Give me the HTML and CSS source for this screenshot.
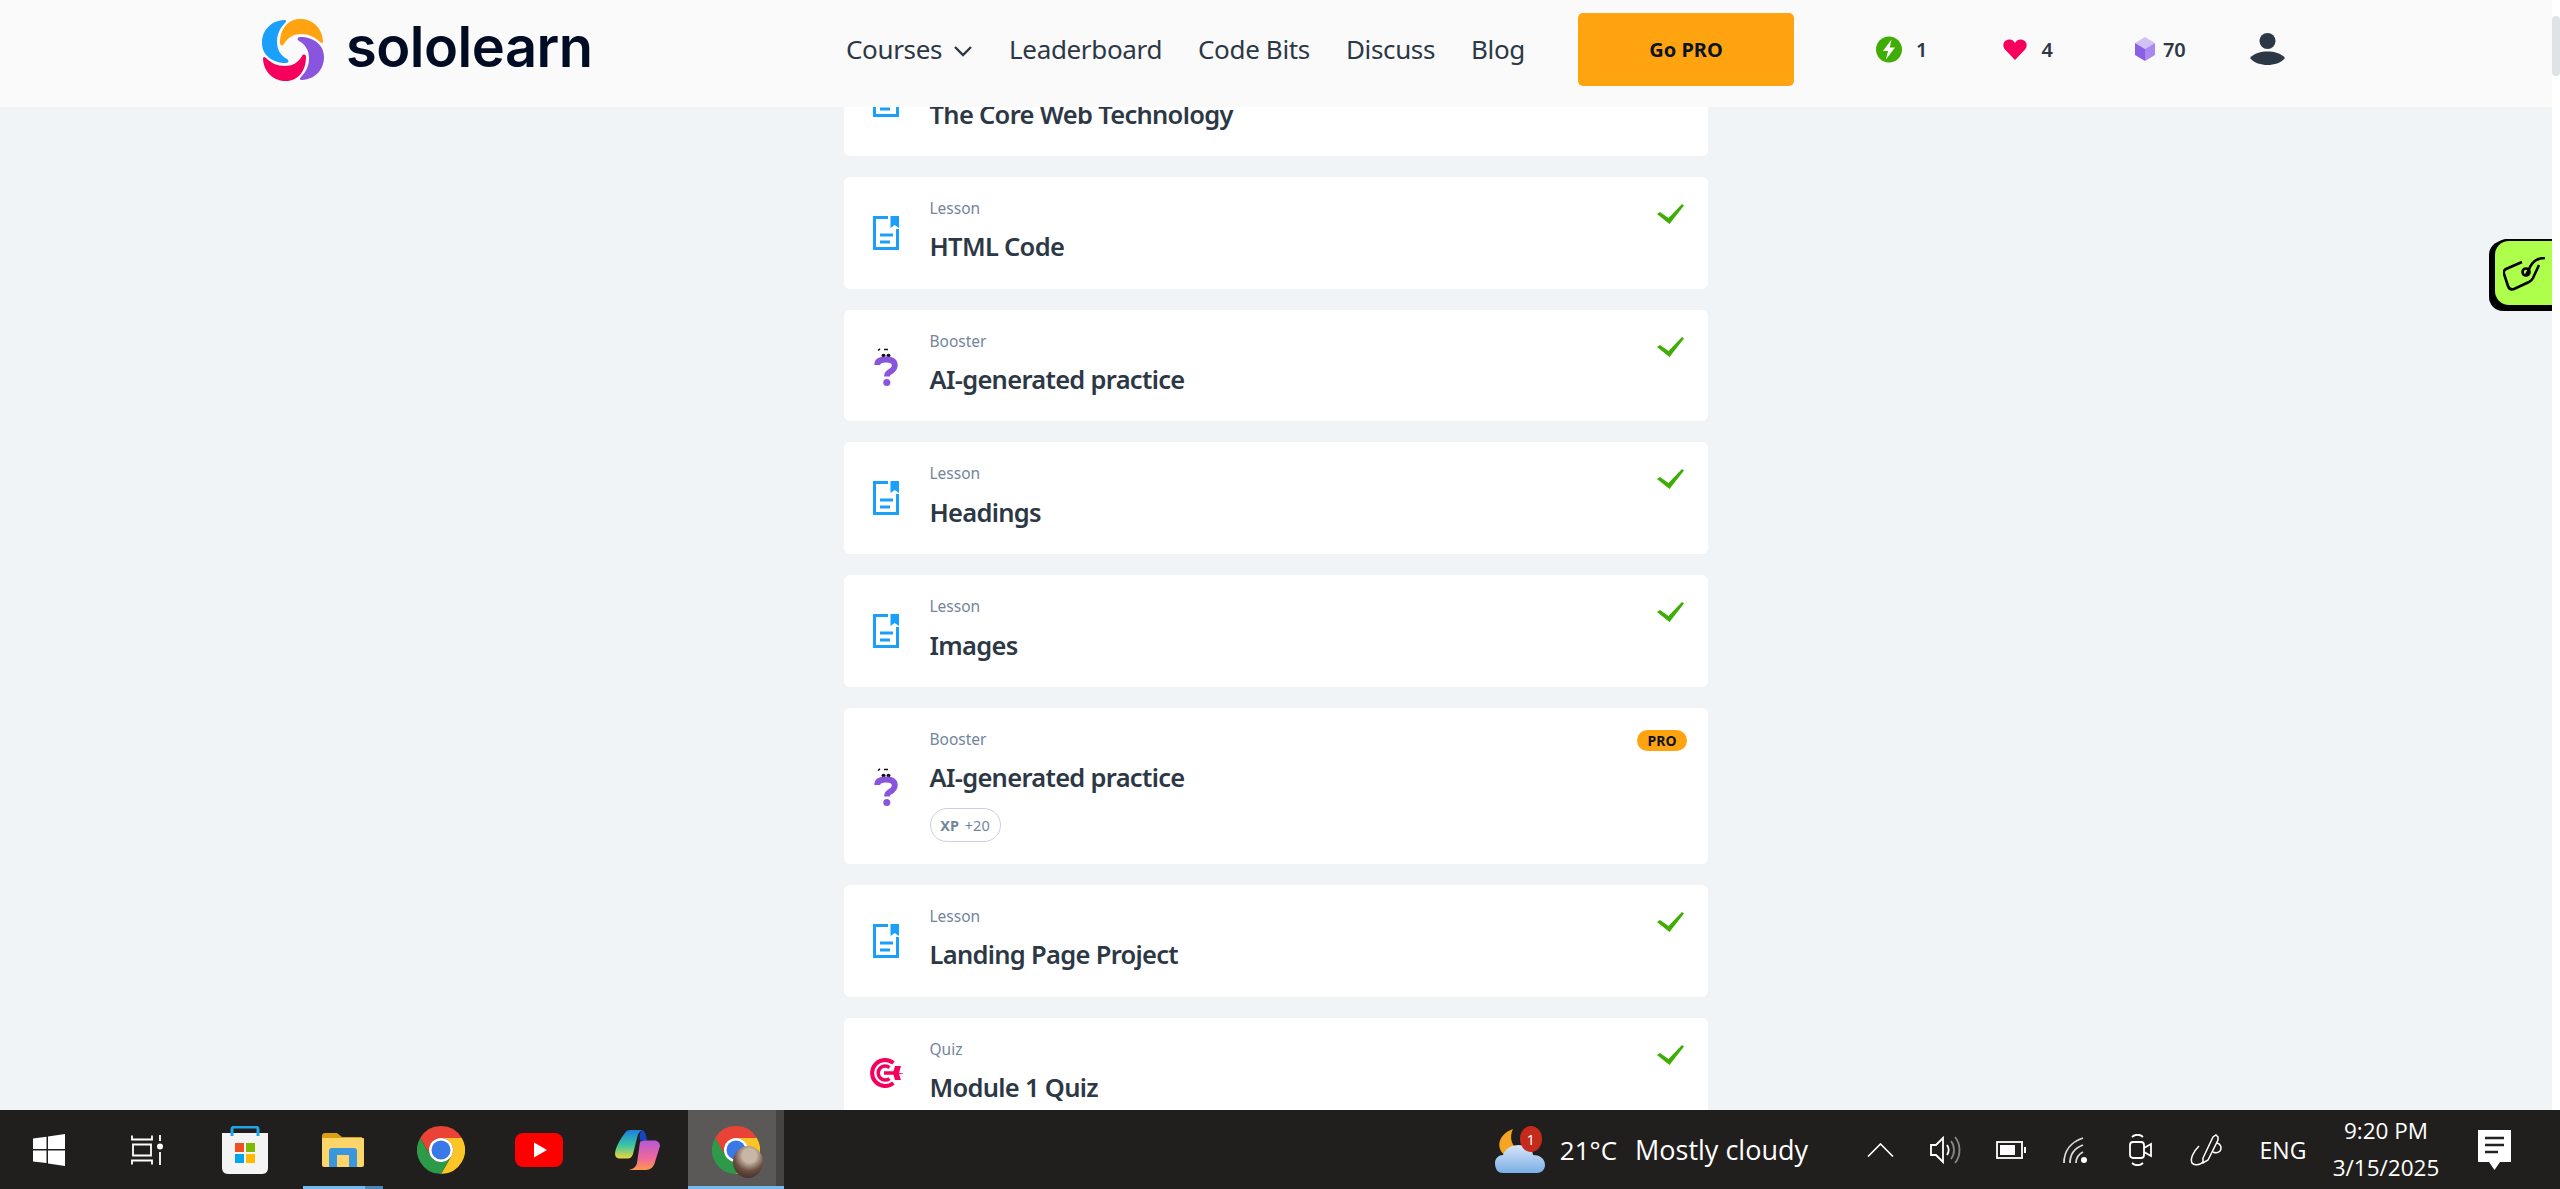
FILE: index.html
```html
<!DOCTYPE html>
<html lang="en">
<head>
    <meta charset="UTF-8">
    <meta name="viewport" content="width=device-width, initial-scale=1.0">
    <title>Sololearn</title>
    <link rel="stylesheet" href="styles.css">
</head>
<body>
    <svg class="defs" width="0" height="0">
        <symbol id="ico-lesson" viewBox="0 0 26 34">
            <path d="M15 1.500H1.500V32.500H24.500V13" fill="none" stroke="#1a9ffb" stroke-width="3"/>
            <path d="M17.500 0H26V12L21.700 9L17.500 12Z" fill="#1a9ffb"/>
            <path d="M7 17.500H20V20.500H7ZM7 24.500H17V27.500H7Z" fill="#1a9ffb"/>
        </symbol>
        <symbol id="ico-booster" viewBox="0 0 24 38">
            <path d="M4 2.500L6 .8M10 1.500H14" stroke="#111" stroke-width="1.600" fill="none"/>
            <ellipse cx="9.500" cy="7.500" rx="2" ry="1.800" fill="#111"/>
            <ellipse cx="14.500" cy="7.500" rx="2" ry="1.800" fill="#111"/>
            <path d="M3.200 17C3.200 13 7 11.500 12 11.500C17.500 11.500 20.800 13.500 20.800 17.500C20.800 21.500 17.500 23 15 24.500C13.500 25.400 13 26.500 13 28.500" fill="none" stroke="#8a55de" stroke-width="5.800"/>
            <circle cx="12.800" cy="34.500" r="3.500" fill="#8a55de"/>
        </symbol>
        <symbol id="ico-quiz" viewBox="0 0 33 30">
            <path d="M23.400 5A13 13 0 1 0 23.400 25" fill="none" stroke="#f5005c" stroke-width="4"/>
            <path d="M19.500 9.500A7 7 0 1 0 19.500 20.500" fill="none" stroke="#f5005c" stroke-width="3.500"/>
            <path d="M14 15H28" stroke="#f5005c" stroke-width="3.500"/>
            <path d="M25 8H31L29 15L33 15.500V16H29L31 22H25L23 15Z" fill="#f5005c"/>
        </symbol>
        <symbol id="ico-check" viewBox="0 0 27 20">
            <path d="M0 10L3 8L11.500 14L25 0L27 1.500L12.500 20Z" fill="#3fad05"/>
        </symbol>
        <symbol id="ico-chrome" viewBox="0 0 48 48">
            <path d="M24 0A24 24 0 0 1 44.800 12H24A12 12 0 0 0 13.600 30L3.200 12A24 24 0 0 1 24 0Z" fill="#ea4335"/>
            <path d="M44.800 12A24 24 0 0 1 24 48L34.400 30A12 12 0 0 0 24 12Z" fill="#fcc526"/>
            <path d="M24 48A24 24 0 0 1 3.200 12L13.600 30A12 12 0 0 0 34.400 30Z" fill="#2c9a47"/>
            <circle cx="24" cy="24" r="12" fill="#fff"/>
            <circle cx="24" cy="24" r="9.500" fill="#3b78e7"/>
        </symbol>
    </svg>

    <main class="course-list">
        <div class="row">
            <svg class="row-icon"><use href="#ico-lesson"/></svg>
            <div class="row-text"><span class="kind">Lesson</span><span class="name">The Core Web Technology</span></div>
        </div>
        <div class="row">
            <svg class="row-icon"><use href="#ico-lesson"/></svg>
            <div class="row-text"><span class="kind">Lesson</span><span class="name">HTML Code</span></div>
            <svg class="done"><use href="#ico-check"/></svg>
        </div>
        <div class="row">
            <svg class="row-icon booster"><use href="#ico-booster"/></svg>
            <div class="row-text"><span class="kind">Booster</span><span class="name">AI-generated practice</span></div>
            <svg class="done"><use href="#ico-check"/></svg>
        </div>
        <div class="row">
            <svg class="row-icon"><use href="#ico-lesson"/></svg>
            <div class="row-text"><span class="kind">Lesson</span><span class="name">Headings</span></div>
            <svg class="done"><use href="#ico-check"/></svg>
        </div>
        <div class="row">
            <svg class="row-icon"><use href="#ico-lesson"/></svg>
            <div class="row-text"><span class="kind">Lesson</span><span class="name">Images</span></div>
            <svg class="done"><use href="#ico-check"/></svg>
        </div>
        <div class="row row-tall">
            <svg class="row-icon booster"><use href="#ico-booster"/></svg>
            <div class="row-text">
                <span class="kind">Booster</span><span class="name">AI-generated practice</span>
                <span class="xp"><b>XP</b> +20</span>
            </div>
            <span class="pro-badge">PRO</span>
        </div>
        <div class="row">
            <svg class="row-icon"><use href="#ico-lesson"/></svg>
            <div class="row-text"><span class="kind">Lesson</span><span class="name">Landing Page Project</span></div>
            <svg class="done"><use href="#ico-check"/></svg>
        </div>
        <div class="row">
            <svg class="row-icon quiz"><use href="#ico-quiz"/></svg>
            <div class="row-text"><span class="kind">Quiz</span><span class="name">Module 1 Quiz</span></div>
            <svg class="done"><use href="#ico-check"/></svg>
        </div>
    </main>

    <header class="topbar">
        <a class="logo">
            <svg class="logo-mark" viewBox="0 0 62 62">
                <defs><path id="swirl" d="M22 1C8 2 0 12 0 24C0 36 10 44 24 44C27 44 27 41 25 40C18 36 15 30 15 23C15 15 18 9 23 4C25 2 24 1 22 1Z"/></defs>
                <use href="#swirl" fill="#1a9ffb"/>
                <use href="#swirl" fill="#ffa310" transform="rotate(90 31 31)"/>
                <use href="#swirl" fill="#8a55de" transform="rotate(180 31 31)"/>
                <use href="#swirl" fill="#f5005c" transform="rotate(270 31 31)"/>
            </svg>
            <span class="logo-word">sololearn</span>
        </a>
        <nav class="nav">
            <a class="nav-link">Courses
                <svg class="caret" viewBox="0 0 20 12"><path d="M2 2L10 10L18 2" fill="none" stroke="#2d3846" stroke-width="2.400"/></svg>
            </a>
            <a class="nav-link">Leaderboard</a>
            <a class="nav-link">Code Bits</a>
            <a class="nav-link">Discuss</a>
            <a class="nav-link">Blog</a>
        </nav>
        <a class="go-pro">Go PRO</a>
        <div class="stats">
            <span class="stat stat-bolt">
                <svg width="26" height="27" viewBox="0 0 26 27"><circle cx="13" cy="13.500" r="13" fill="#3fad05"/><path d="M15.500 3.500L7 15H12L10 23.500L19 11.500H13.800Z" fill="#fff"/></svg>
                1
            </span>
            <span class="stat stat-heart">
                <svg width="24" height="21" viewBox="0 0 24 21"><path d="M12 21L2 10.500C-1 7 0 1 6 .5C9 .3 11 2 12 4C13 2 15 .3 18 .5C24 1 25 7 22 10.500Z" fill="#f5005c"/></svg>
                4
            </span>
            <span class="stat stat-gem">
                <svg width="20" height="24" viewBox="0 0 20 24"><path d="M10 0L20 6L10 12L0 6Z" fill="#d0c3f3"/><path d="M0 6L10 12V24L0 18Z" fill="#8a5fe6"/><path d="M20 6L10 12V24L20 18Z" fill="#ab87f2"/></svg>
                70
            </span>
            <svg class="avatar" viewBox="0 0 35 32"><circle cx="17.500" cy="8" r="8" fill="#2d3846"/><path d="M0 25C4 20 11 18.500 17.500 18.500C24 18.500 31 20 35 25C31 30 24 32 17.500 32C11 32 4 30 0 25Z" fill="#2d3846"/></svg>
        </div>
    </header>

    <div class="scrollbar"><div class="thumb"></div></div>

    <aside class="promo-tab">
        <svg width="44" height="36" viewBox="0 0 44 36"><path d="M19 5L3 12C1 13 0 14 1 17L5 29C6 32 8 33 11 32L26 25C28 24 29 23 30 21L36 8" fill="none" stroke="#000" stroke-width="2.600"/><circle cx="23" cy="15" r="3.500" fill="none" stroke="#000" stroke-width="2.600"/><path d="M42 1C34 1 30 4 27 10C26 13 25 15 23 18" fill="none" stroke="#000" stroke-width="2.600"/></svg>
    </aside>

    <footer class="taskbar">
        <div class="task-icons">
            <span class="slot">
                <svg width="32" height="32" viewBox="0 0 32 32"><path d="M0 4.600L13.500 2.700V15H0ZM15 2.500L32 0V15H15ZM0 16.500H13.500V29L0 27.400ZM15 16.500H32V32L15 29.500Z" fill="#fff"/></svg>
            </span>
            <span class="slot">
                <svg width="32" height="30" viewBox="0 0 32 30"><path d="M1 .5V4.500H21V.5M1 29.500V25.500H21V29.500M2 9.500H20V20.500H2Z" fill="none" stroke="#fff" stroke-width="1.800"/><circle cx="29" cy="11.500" r="3" fill="#fff"/><path d="M29 0V6M29 17V30" stroke="#fff" stroke-width="1.800"/></svg>
            </span>
            <span class="slot">
                <svg width="46" height="48" viewBox="0 0 46 48"><path d="M0 7H46V42C46 45 44 48 40 48H6C2 48 0 45 0 42Z" fill="#f4f4f4"/><path d="M10 10V3C10 1 11 1 13 1H33C35 1 36 1 36 3V10" fill="none" stroke="#1fa6e8" stroke-width="3"/><path d="M13 17H22V26H13Z" fill="#f25022"/><path d="M24 17H33V26H24Z" fill="#7fba00"/><path d="M13 28H22V37H13Z" fill="#00a4ef"/><path d="M24 28H33V37H24Z" fill="#ffb900"/></svg>
            </span>
            <span class="slot slot-open">
                <svg width="42" height="34" viewBox="0 0 42 34"><path d="M0 3C0 1 1 0 3 0H15L20 4H40V10H0Z" fill="#d9a00f"/><path d="M0 5H41C41.500 5 42 5.500 42 6V32C42 33 41 34 40 34H2C1 34 0 33 0 32Z" fill="#fdd568"/><path d="M7 34V18C7 16 8 15 10 15H32C34 15 35 16 35 18V34H27V22H15V34Z" fill="#3a96dd"/></svg>
            </span>
            <span class="slot"><svg width="48" height="48"><use href="#ico-chrome"/></svg></span>
            <span class="slot">
                <svg width="48" height="34" viewBox="0 0 48 34"><rect width="48" height="34" rx="8" fill="#f00"/><path d="M19 9.500L32 17L19 24.500Z" fill="#fff"/></svg>
            </span>
            <span class="slot">
                <svg width="45" height="40" viewBox="0 0 45 40">
                    <defs>
                        <linearGradient id="cp-a" x1="0" y1="0" x2="0" y2="1"><stop offset="0" stop-color="#1b7fe0"/><stop offset=".55" stop-color="#3cc8a0"/><stop offset="1" stop-color="#f2d43a"/></linearGradient>
                        <linearGradient id="cp-b" x1="0" y1="0" x2="0" y2="1"><stop offset="0" stop-color="#b45ad8"/><stop offset=".6" stop-color="#f0689a"/><stop offset="1" stop-color="#fb9a4c"/></linearGradient>
                    </defs>
                    <path d="M10 3C11 1 13 0 15 0H27C24 2 23 4 22 8L18 24C17 27 15 28.500 13 28.500H5C1 28.500 0 26 0 23C1 16 6 8 10 3Z" fill="url(#cp-a)"/>
                    <path d="M27 0C30 1 31 4 32 10.500H25C24 6 25 2 27 0Z" fill="#1546c0"/>
                    <path d="M25 12C26 11 28 10.500 30 10.500H39C43 10.500 45 13 45 16L40 32C39 37 35 40 31 40H14C18 39 21 37 22 33Z" fill="url(#cp-b)"/>
                </svg>
            </span>
            <span class="slot slot-active">
                <span class="chrome-stack">
                    <svg width="48" height="48"><use href="#ico-chrome"/></svg>
                    <span class="profile-pic"></span>
                </span>
            </span>
            <span class="slot-edge"></span>
        </div>
        <div class="tray">
            <span class="weather">
                <svg width="50" height="46" viewBox="0 0 50 46">
                    <defs><linearGradient id="cloud" x1="0" y1="0" x2="0" y2="1"><stop offset="0" stop-color="#d8e6f8"/><stop offset="1" stop-color="#7aaee6"/></linearGradient></defs>
                    <path d="M18 2C14 10 16 20 26 24L10 28C1 22 2 8 18 2Z" fill="#f4a623"/>
                    <path d="M8 46C2 46 0 41 0 36C0 31 4 28 8 28C10 22 16 18 24 18C32 18 38 23 38 28C44 28 50 31 50 38C50 43 46 46 42 46Z" fill="url(#cloud)"/>
                </svg>
                <span class="weather-badge">1</span>
            </span>
            <span class="temp">21°C</span>
            <span class="sky">Mostly cloudy</span>
            <span class="tray-slot">
                <svg width="27" height="14" viewBox="0 0 27 14"><path d="M1 13.500L13.500 1L26 13.500" fill="none" stroke="#fff" stroke-width="1.600"/></svg>
            </span>
            <span class="tray-slot">
                <svg width="32" height="30" viewBox="0 0 32 30"><path d="M1 10H6L13 3V27L6 20H1Z" fill="none" stroke="#fff" stroke-width="1.800"/><path d="M17 10C19 13 19 17 17 20" fill="none" stroke="#fff" stroke-width="1.800"/><path d="M21 6C25 11 25 19 21 24M25 2C31 9 31 21 25 28" fill="none" stroke="#888" stroke-width="1.800"/></svg>
            </span>
            <span class="tray-slot">
                <svg width="30" height="18" viewBox="0 0 30 18"><rect x="1" y="1" width="25" height="16" fill="none" stroke="#fff" stroke-width="1.800"/><rect x="4" y="4" width="15" height="10" fill="#fff"/><path d="M28 6H30V12H28Z" fill="#fff"/></svg>
            </span>
            <span class="tray-slot">
                <svg width="26" height="26" viewBox="0 0 26 26"><path d="M1 26C1 14 8 5 20 1M7 26C7 17 12 11 20 8M13 26C13 21 16 17 20 15" fill="none" stroke="#ddd" stroke-width="1.800"/><circle cx="21" cy="23" r="3" fill="#fff"/></svg>
            </span>
            <span class="tray-slot">
                <svg width="23" height="32" viewBox="0 0 23 32"><path d="M3 3C6 0 11 0 14 3M3 29C6 32 11 32 14 29" fill="none" stroke="#fff" stroke-width="1.800"/><rect x="1" y="8" width="14" height="16" rx="3" fill="none" stroke="#fff" stroke-width="1.800"/><path d="M15 14L22 10V22L15 18" fill="none" stroke="#fff" stroke-width="1.800"/></svg>
            </span>
            <span class="tray-slot">
                <svg width="32" height="32" viewBox="0 0 32 32"><path d="M13 24L23 3L26 1L28 3L28 6L18 26L13 29Z" fill="none" stroke="#fff" stroke-width="1.500"/><path d="M9 12C3 18 0 25 2 29C4 32 10 31 13 28" fill="none" stroke="#fff" stroke-width="1.500"/><path d="M27 9C31 10 32 14 30 17C28 19 25 19 23 18" fill="none" stroke="#fff" stroke-width="1.500"/></svg>
            </span>
            <span class="lang">ENG</span>
            <span class="clock"><span>9:20 PM</span><span>3/15/2025</span></span>
            <span class="notif">
                <svg width="33" height="40" viewBox="0 0 33 40"><path d="M0 0H33V32H22L16.500 40L11 32H0Z" fill="#fff"/><path d="M7 8H26M7 15H26M7 22H20" stroke="#222" stroke-width="2.400"/></svg>
            </span>
        </div>
    </footer>
</body>
</html>
```

FILE: styles.css
```css
* {
    box-sizing: border-box;
}

body {
    margin: 0;
    height: 100vh;
    overflow: hidden;
    background: #f1f4f7;
    font-family: "Noto Sans", sans-serif;
    color: #2d3846;
}

.defs {
    position: absolute;
}

/* list */
.course-list {
    width: 864px;
    margin-left: 844px;
    padding-top: 44px;
    display: flex;
    flex-direction: column;
    gap: 21px;
}

.row {
    position: relative;
    flex: none;
    height: 111.75px;
    padding-top: 19px;
    display: flex;
    background: #fff;
    border-radius: 6px;
}

.row-tall {
    height: 156px;
}

.row-icon {
    position: absolute;
    left: 29px;
    top: 39px;
    width: 26px;
    height: 34px;
}

.booster {
    left: 30px;
    top: 38px;
    width: 24px;
    height: 38px;
}

.row-tall .booster {
    top: 60px;
}

.quiz {
    left: 26px;
    top: 40px;
    width: 33px;
    height: 30px;
}

.row-text {
    margin-left: 85.5px;
    display: flex;
    flex-direction: column;
    align-items: flex-start;
}

.kind {
    font-size: 15.5px;
    line-height: 24px;
    color: #73859d;
}

.name {
    margin-top: 8.5px;
    font-size: 25.5px;
    font-weight: 600;
    line-height: 36px;
    letter-spacing: -.7px;
    color: #2d3846;
}

.done {
    position: absolute;
    right: 24px;
    top: 27px;
    width: 27px;
    height: 20px;
}

.pro-badge {
    position: absolute;
    right: 21px;
    top: 22px;
    width: 50px;
    height: 21px;
    border-radius: 11px;
    background: #ffa310;
    color: #0c1424;
    font-size: 14px;
    font-weight: 700;
    line-height: 21px;
    text-align: center;
}

.xp {
    margin-top: 13px;
    width: 71px;
    height: 34px;
    border: 1px solid #c8d1dc;
    border-radius: 17px;
    font-size: 14.5px;
    line-height: 32px;
    text-align: center;
    color: #73859d;
}

.xp b {
    margin-right: 2px;
}

/* header */
.topbar {
    position: fixed;
    top: 0;
    left: 0;
    right: 8px;
    height: 107px;
    padding: 0 0 9px 262px;
    display: flex;
    align-items: center;
    background: #fafafa;
}

.logo {
    width: 584px;
    display: flex;
    align-items: center;
}

.logo-mark {
    width: 62px;
    height: 62px;
    margin-top: 1px;
}

.logo-word {
    margin-left: 22px;
    margin-top: -4px;
    font-family: Inter, sans-serif;
    font-size: 56px;
    font-weight: 600;
    letter-spacing: -.5px;
    color: #000b24;
}

.nav {
    display: flex;
    gap: 36px;
}

.nav-link {
    display: flex;
    align-items: center;
    font-size: 26px;
    letter-spacing: -.35px;
    color: #2d3846;
}

.caret {
    width: 20px;
    height: 12px;
    margin-left: 11px;
    margin-top: 4px;
}

.go-pro {
    width: 216px;
    height: 73px;
    margin-left: 53px;
    border-radius: 5px;
    background: #ffa310;
    color: #0c1424;
    font-size: 20px;
    font-weight: 700;
    line-height: 73px;
    text-align: center;
}

.stats {
    display: flex;
    align-items: center;
    margin-left: 82px;
    font-size: 20px;
    font-weight: 600;
}

.stat {
    display: flex;
    align-items: center;
    gap: 14px;
}

.stat-heart {
    margin-left: 76px;
}

.stat-gem {
    margin-left: 82px;
    gap: 8px;
}

.avatar {
    width: 35px;
    height: 32px;
    margin-left: 64px;
}

.scrollbar {
    position: fixed;
    top: 0;
    right: 0;
    bottom: 79px;
    width: 8px;
    background: #fff;
}

.thumb {
    height: 60px;
    margin-top: 16px;
    border-radius: 4px;
    background: #dfe3e8;
}

.promo-tab {
    position: fixed;
    top: 241px;
    right: 8px;
    width: 57px;
    height: 64px;
    padding: 16px 0 0 8px;
    background: #adff4c;
    border-radius: 14px 0 0 14px;
    box-shadow: -6px 0 0 #000, -6px 6px 0 #000, 0 6px 0 #000, 0 -2px 0 #000, -2px -2px 0 #000;
}

/* windows taskbar */
.taskbar {
    position: fixed;
    left: 0;
    right: 0;
    bottom: 0;
    height: 79px;
    display: flex;
    justify-content: space-between;
    background: #211f1e;
    color: #fff;
    font-family: "Open Sans", sans-serif;
}

.task-icons {
    display: flex;
}

.slot {
    position: relative;
    width: 98px;
    display: flex;
    align-items: center;
    justify-content: center;
}

.slot-open::after {
    content: "";
    position: absolute;
    left: 9px;
    right: 9px;
    bottom: 0;
    height: 3px;
    background: linear-gradient(90deg, #76b9ed 78%, #4e86b4 78%);
}

.slot-active {
    width: 88px;
    margin-left: 2px;
    background: #5a5958;
}

.slot-active::after {
    content: "";
    position: absolute;
    left: 0;
    right: -8px;
    bottom: 0;
    height: 3px;
    background: #76b9ed;
}

.slot-edge {
    width: 8px;
    background: #454443;
}

.chrome-stack {
    position: relative;
    margin-left: 8px;
    display: flex;
}

.profile-pic {
    position: absolute;
    left: 21px;
    top: 20px;
    width: 30px;
    height: 32px;
    border-radius: 50%;
    background: radial-gradient(circle at 55% 30%, #c9b7a6 0 25%, #6b4f42 55%, #2a1c1a 100%);
}

.tray {
    display: flex;
    align-items: center;
}

.weather {
    position: relative;
    display: flex;
    width: 65px;
}

.weather-badge {
    position: absolute;
    left: 25px;
    top: -1px;
    width: 22px;
    height: 26px;
    border-radius: 50%;
    background: #c42b1c;
    font-size: 15px;
    line-height: 26px;
    text-align: center;
}

.temp {
    font-size: 26px;
}

.sky {
    margin-left: 18px;
    margin-right: 40px;
    font-size: 27px;
}

.tray-slot {
    width: 65px;
    display: flex;
    justify-content: center;
}

.lang {
    width: 90px;
    text-align: center;
    font-size: 23px;
}

.clock {
    width: 116px;
    display: flex;
    flex-direction: column;
    align-items: center;
    gap: 9px;
    font-size: 22.5px;
    line-height: 28px;
}

.notif {
    margin-left: 34px;
    margin-right: 49px;
    display: flex;
}
```
